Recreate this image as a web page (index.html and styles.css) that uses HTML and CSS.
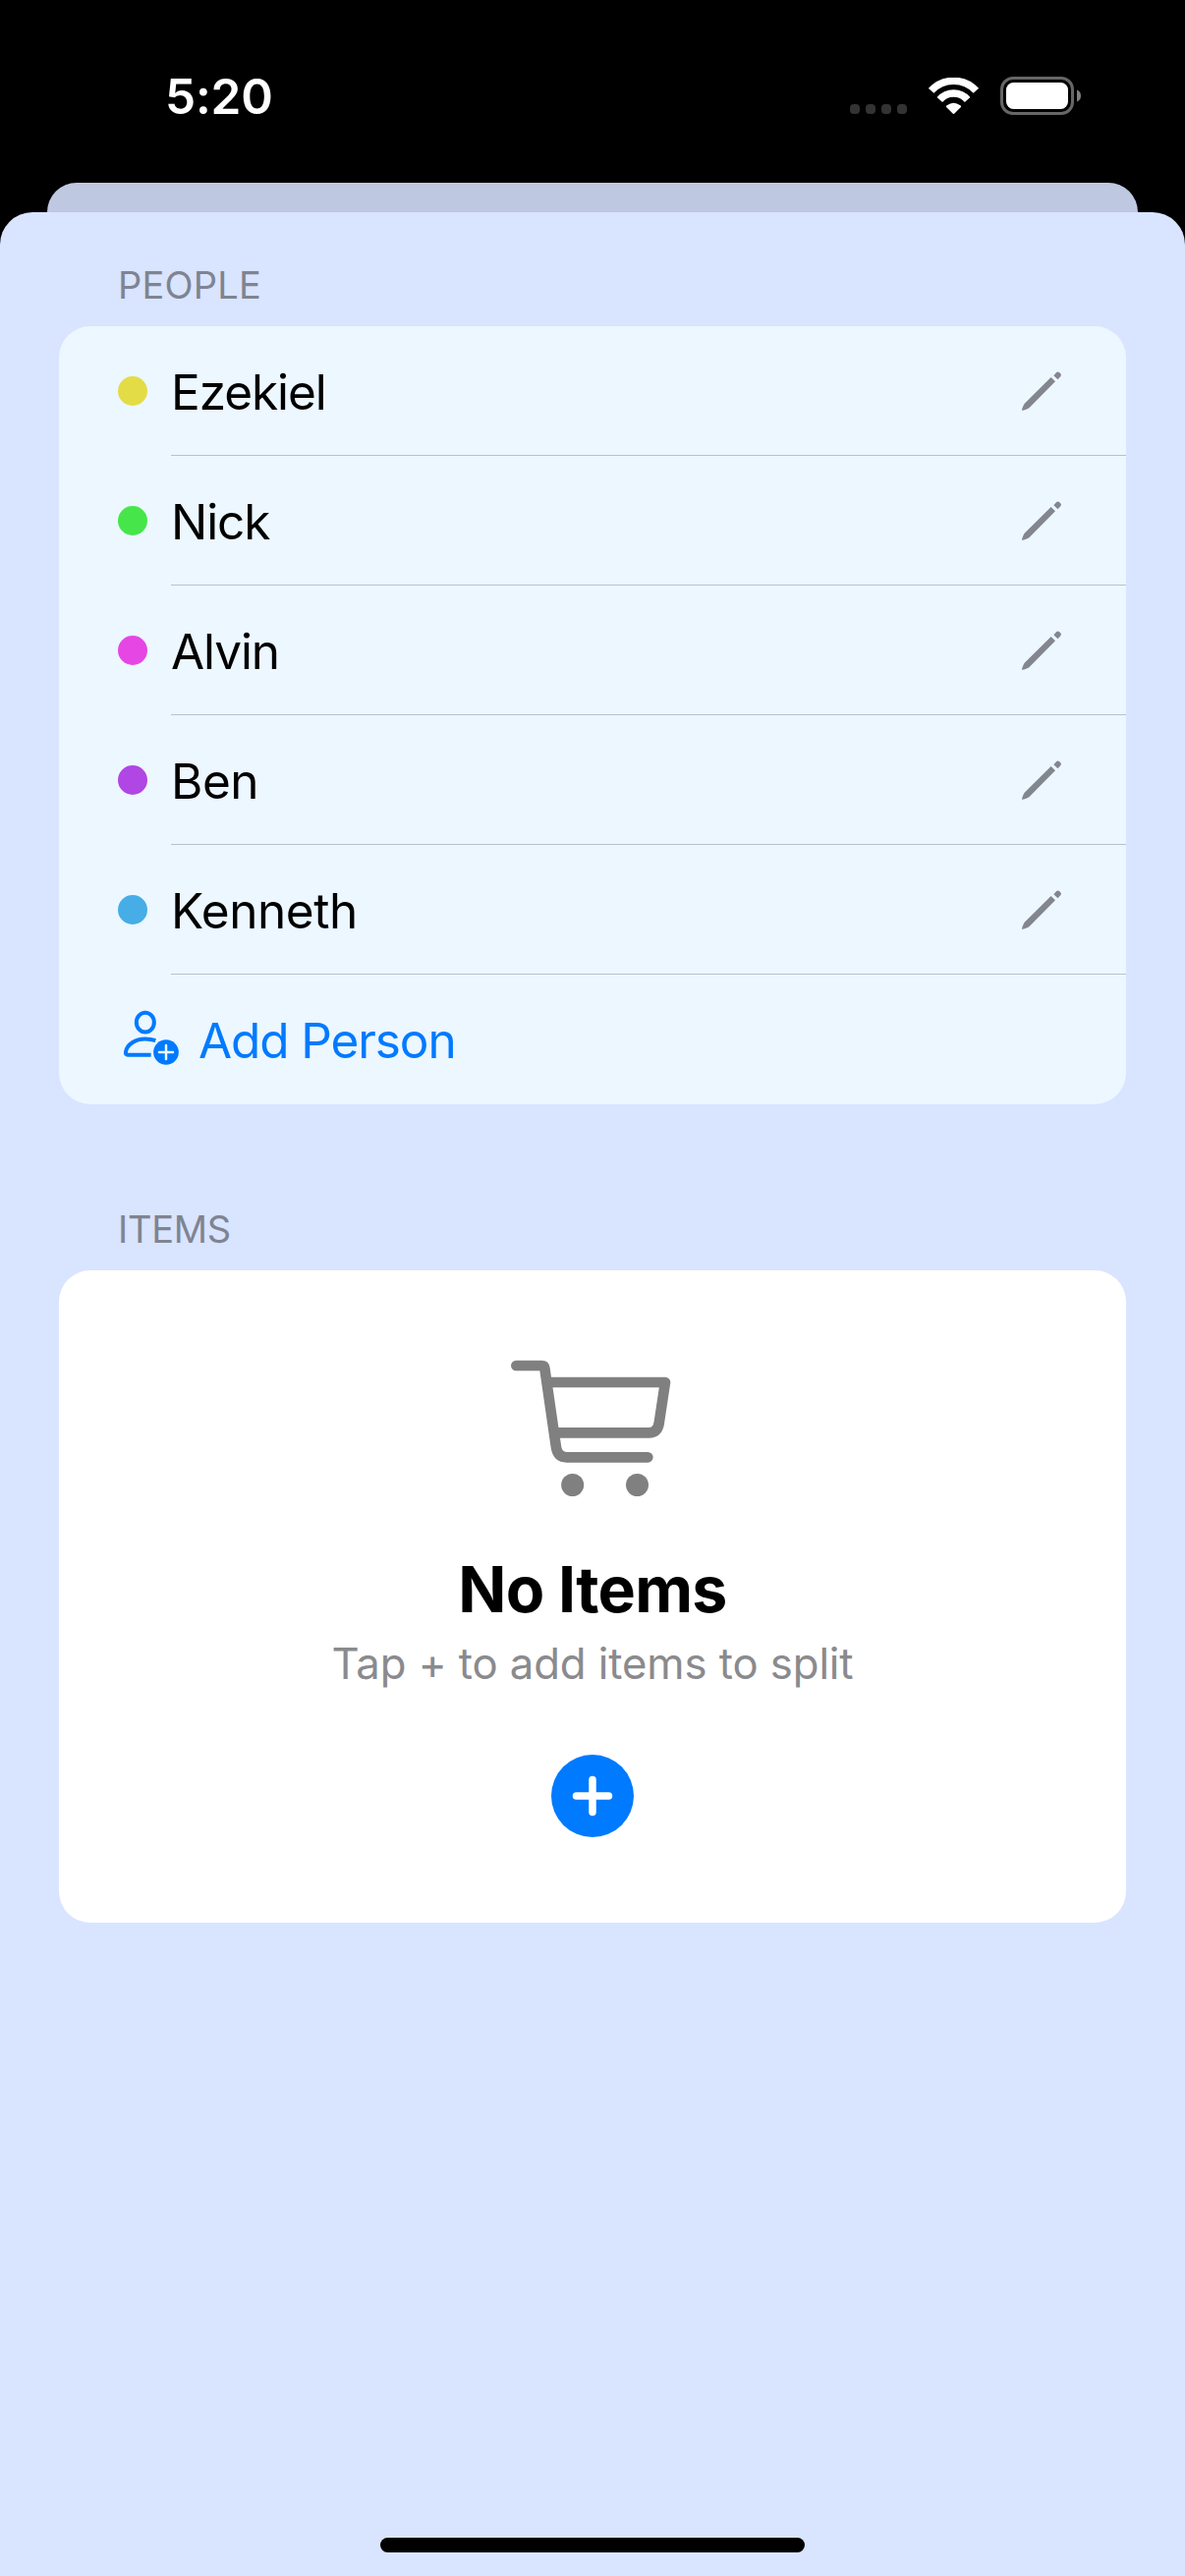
FILE: index.html
```html
<!DOCTYPE html>
<html lang="en">
<head>
<meta charset="utf-8">
<title>Split</title>
<link rel="stylesheet" href="styles.css">
</head>
<body>
<svg class="defs" width="0" height="0" aria-hidden="true">
  <symbol id="pencil" viewBox="117 171 126 126">
    <path d="M120 293.500C120 289 125 276 128 272L209 192L222 205L142 286C138 289 125 294.500 120 293.500Z M217 187L225 178Q229 173.500 234 177L238 181Q242 185 238 190L229.500 198.500Z"/>
  </symbol>
</svg>
<header class="status">
  <time class="clock">5:20</time>
  <div class="indicators">
    <div class="signal"><i></i><i></i><i></i><i></i></div>
    <svg class="wifi" width="51" height="37" viewBox="315 87 153 111">
      <g fill="none" stroke="#fff" stroke-width="22">
        <path d="M323 127A93 93 0 0 1 460 127"/>
        <path d="M349 154.500A56 56 0 0 1 434 154.500"/>
      </g>
      <path fill="#fff" d="M388 196L370 178Q367 175 371 172Q391.500 156 412 172Q416 175 413 178L395 196Q391.500 199.500 388 196Z"/>
    </svg>
    <svg width="83" height="39" viewBox="0 0 83 39">
      <rect x="1.500" y="1.500" width="72" height="36" rx="11.500" fill="none" stroke="#666" stroke-width="3"/>
      <rect x="6" y="6" width="63" height="27" rx="7.500" fill="#fff"/>
      <path d="M78 13.500Q82 15 82 19.500T78 25.500Z" fill="#808080"/>
    </svg>
  </div>
</header>
<div class="sheet-behind"></div>
<main class="sheet">
  <h2 class="section-title">PEOPLE</h2>
  <ul class="card people">
    <li class="row"><span class="dot yellow"></span><div class="person"><span class="name">Ezekiel</span><svg class="pencil"><use href="#pencil"/></svg></div></li>
    <li class="row"><span class="dot green"></span><div class="person"><span class="name">Nick</span><svg class="pencil"><use href="#pencil"/></svg></div></li>
    <li class="row"><span class="dot pink"></span><div class="person"><span class="name">Alvin</span><svg class="pencil"><use href="#pencil"/></svg></div></li>
    <li class="row"><span class="dot purple"></span><div class="person"><span class="name loose">Ben</span><svg class="pencil"><use href="#pencil"/></svg></div></li>
    <li class="row"><span class="dot blue"></span><div class="person"><span class="name loose">Kenneth</span><svg class="pencil"><use href="#pencil"/></svg></div></li>
    <li class="row add">
      <svg width="60" height="60" viewBox="222 204 180 180" fill="none" stroke="#007aff" stroke-width="12">
        <ellipse cx="293.500" cy="242" rx="27" ry="29.500"/>
        <path d="M311 341H240Q233 341 234 332C237 309 264 292.500 293 292.500Q311 292.500 325 297.500"/>
        <circle cx="357" cy="333" r="44" fill="#ecf7ff" stroke="none"/>
        <circle cx="357" cy="333" r="38.500" fill="#007aff" stroke="none"/>
        <path d="M336 333H378M357 312V354" stroke="#ecf7ff" stroke-width="7.500" stroke-linecap="round"/>
      </svg>
      <span class="name">Add Person</span>
    </li>
  </ul>
  <h2 class="section-title items-title">ITEMS</h2>
  <section class="card empty">
    <svg width="180" height="150" viewBox="69 90 540 450" fill="none" stroke="#808080" stroke-width="32" stroke-linecap="round" stroke-linejoin="round">
      <path d="M106 120H184Q192 120 193 128L228 370Q233 400 260 400H508"/>
      <path d="M202 171H561L542 297Q537 325 511 325H224"/>
      <g fill="#808080" stroke="none"><circle cx="278" cy="484.500" r="34.500"/><circle cx="475.500" cy="484.500" r="34.500"/></g>
    </svg>
    <h3 class="empty-title">No Items</h3>
    <p class="empty-text">Tap + to add items to split</p>
    <svg class="plus" width="84" height="84" viewBox="0 0 84 84">
      <circle cx="42" cy="42" r="42" fill="#007aff"/>
      <path d="M25.500 42H58.500M42 25.500V58.500" stroke="#fff" stroke-width="7.500" stroke-linecap="round"/>
    </svg>
  </section>
  <div class="home-bar"></div>
</main>
</body>
</html>
```
FILE: styles.css
```css
* { box-sizing: border-box; margin: 0; padding: 0; }
body {
  display: flex;
  flex-direction: column;
  width: 1206px;
  height: 2622px;
  overflow: hidden;
  background: #000;
  color: #000;
  font-family: Inter, "Liberation Sans", sans-serif;
}
svg { display: block; flex: none; }
.defs { position: absolute; }
.status {
  display: flex;
  justify-content: space-between;
  align-items: flex-start;
  height: 186px;
  padding: 68px 105px 0 168px;
}
.clock { color: #fff; font-size: 49.5px; font-weight: 600; line-height: 60px; letter-spacing: -0.15px; }
.indicators { display: flex; align-items: flex-end; height: 49px; }
.signal { display: flex; gap: 6px; margin: 0 22px 1px 0; }
.signal i { width: 10px; height: 10px; border-radius: 4px; background: #333; }
.wifi { margin: 0 22px 1px 0; }
.sheet-behind { height: 30px; margin: 0 48px; border-radius: 30px 30px 0 0; background: #bfc8e1; }
.sheet {
  flex: 1;
  display: flex;
  flex-direction: column;
  padding: 52px 60px 24px;
  border-radius: 33px 33px 0 0;
  background: #d9e4ff;
}
.section-title {
  padding: 0 60px 19px;
  color: #7f8491;
  font-size: 38px;
  font-weight: 400;
  line-height: 45px;
  letter-spacing: 0.22px;
}
.items-title { margin-top: 105px; letter-spacing: -0.3px; }
.card { border-radius: 32px; overflow: hidden; }
.people { background: #ecf7ff; list-style: none; }
.row { display: flex; align-items: center; gap: 24px; height: 132px; padding-left: 60px; }
.dot { width: 30px; height: 30px; border-radius: 50%; }
.yellow { background: #e4dc46; }
.green { background: #46e64a; }
.pink { background: #e646e3; }
.purple { background: #b046e4; }
.blue { background: #46ade6; }
.person {
  flex: 1;
  display: flex;
  align-items: center;
  justify-content: space-between;
  height: 132px;
  padding-right: 65px;
  box-shadow: inset 0 -1px #b7c2cf;
}
.name { padding-top: 1px; font-size: 49.5px; line-height: 60px; letter-spacing: -1.1px; }
.loose { letter-spacing: -0.45px; }
.pencil { width: 42px; height: 42px; fill: #84868f; }
.add { gap: 18px; padding-left: 64px; color: #007aff; }
.empty { display: flex; flex-direction: column; align-items: center; height: 664px; padding-top: 87px; background: #fff; }
.empty-title { margin-top: 49px; font-size: 64.5px; font-weight: 700; line-height: 78px; letter-spacing: -0.76px; }
.empty-text { margin-top: 10px; color: #8a8a8e; font-size: 43.7px; line-height: 54px; letter-spacing: -0.09px; }
.plus { margin-top: 65px; }
.home-bar { width: 432px; height: 15px; margin: auto auto 0; border-radius: 8px; background: #000; }
```
